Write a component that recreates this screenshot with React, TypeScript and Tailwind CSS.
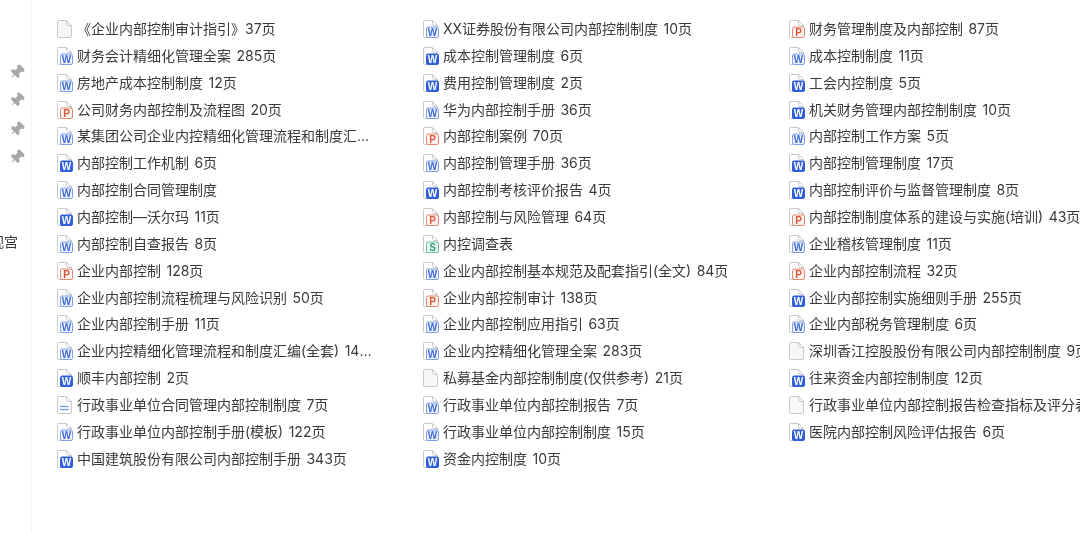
import { Pin } from "lucide-react";

type Kind = "blank" | "word" | "wordDark" | "ppt" | "sheet" | "lines";

type Item = [Kind, string];

const columns: Item[][] = [
  [
    ["blank", "《企业内部控制审计指引》37页"],
    ["word", "财务会计精细化管理全案 285页"],
    ["word", "房地产成本控制制度 12页"],
    ["ppt", "公司财务内部控制及流程图 20页"],
    ["word", "某集团公司企业内控精细化管理流程和制度汇编(全套) 142页"],
    ["wordDark", "内部控制工作机制 6页"],
    ["word", "内部控制合同管理制度"],
    ["wordDark", "内部控制—沃尔玛 11页"],
    ["word", "内部控制自查报告 8页"],
    ["ppt", "企业内部控制 128页"],
    ["word", "企业内部控制流程梳理与风险识别 50页"],
    ["word", "企业内部控制手册 11页"],
    ["word", "企业内控精细化管理流程和制度汇编(全套) 142页"],
    ["wordDark", "顺丰内部控制 2页"],
    ["lines", "行政事业单位合同管理内部控制制度 7页"],
    ["word", "行政事业单位内部控制手册(模板) 122页"],
    ["wordDark", "中国建筑股份有限公司内部控制手册 343页"],
  ],
  [
    ["word", "XX证券股份有限公司内部控制制度 10页"],
    ["wordDark", "成本控制管理制度 6页"],
    ["wordDark", "费用控制管理制度 2页"],
    ["word", "华为内部控制手册 36页"],
    ["ppt", "内部控制案例 70页"],
    ["word", "内部控制管理手册 36页"],
    ["wordDark", "内部控制考核评价报告 4页"],
    ["ppt", "内部控制与风险管理 64页"],
    ["sheet", "内控调查表"],
    ["word", "企业内部控制基本规范及配套指引(全文) 84页"],
    ["ppt", "企业内部控制审计 138页"],
    ["word", "企业内部控制应用指引 63页"],
    ["word", "企业内控精细化管理全案 283页"],
    ["blank", "私募基金内部控制制度(仅供参考) 21页"],
    ["word", "行政事业单位内部控制报告 7页"],
    ["word", "行政事业单位内部控制制度 15页"],
    ["wordDark", "资金内控制度 10页"],
  ],
  [
    ["ppt", "财务管理制度及内部控制 87页"],
    ["word", "成本控制制度 11页"],
    ["wordDark", "工会内控制度 5页"],
    ["wordDark", "机关财务管理内部控制制度 10页"],
    ["word", "内部控制工作方案 5页"],
    ["wordDark", "内部控制管理制度 17页"],
    ["wordDark", "内部控制评价与监督管理制度 8页"],
    ["ppt", "内部控制制度体系的建设与实施(培训) 43页"],
    ["word", "企业稽核管理制度 11页"],
    ["ppt", "企业内部控制流程 32页"],
    ["wordDark", "企业内部控制实施细则手册 255页"],
    ["word", "企业内部税务管理制度 6页"],
    ["blank", "深圳香江控股股份有限公司内部控制制度 9页"],
    ["wordDark", "往来资金内部控制制度 12页"],
    ["blank", "行政事业单位内部控制报告检查指标及评分表"],
    ["wordDark", "医院内部控制风险评估报告 6页"],
  ],
];

function FileIcon({ kind }: { kind: Kind }) {
  const badge = {
    word: { stroke: "#7f9fe8", fill: "#f0f4fe", text: "#3f6ad8", letter: "W" },
    wordDark: { stroke: "#2f5fdc", fill: "#2f5fdc", text: "#ffffff", letter: "W" },
    ppt: { stroke: "#e58a72", fill: "#fdf3f0", text: "#d9583a", letter: "P" },
    sheet: { stroke: "#62c09c", fill: "#effaf5", text: "#2e9e74", letter: "S" },
  };
  const page = kind === "blank" ? "#f7f7f7" : "#ffffff";
  return (
    <svg width="16" height="18" viewBox="0 0 16 18" className="shrink-0">
      <path d="M1.500.5h8L14.500 5.500V16a1.500 1.500 0 0 1-1.500 1.500H1.500A1 1 0 0 1 .5 16.500V1.500a1 1 0 0 1 1-1z" fill={page} stroke="#c9c9c9" />
      <path d="M9.500.5v3a2 2 0 0 0 2 2h3" fill="none" stroke="#c9c9c9" />
      {kind === "lines" && (
        <g stroke="#6f92e4" strokeWidth="1.200">
          <path d="M3 10.500h8.500" />
          <path d="M3 13.500h8.500" />
        </g>
      )}
      {kind !== "blank" && kind !== "lines" && (
        <g>
          <rect x="3.500" y="7" width="12" height="10.500" rx="1.500" fill={badge[kind].fill} stroke={badge[kind].stroke} />
          <text x="9.500" y="16" textAnchor="middle" fontSize="10" fontWeight="700" fontFamily="Liberation Sans, sans-serif" fill={badge[kind].text}>
            {badge[kind].letter}
          </text>
        </g>
      )}
    </svg>
  );
}

export default function App() {
  return (
    <div className="flex h-[533px] w-[1080px] overflow-hidden bg-white font-['Inter','Noto_Sans_CJK_SC',sans-serif] text-sm text-[#3a3a3a] [word-spacing:1.500px] blur-[0.300px]">
      <aside className="flex w-[32px] shrink-0 flex-col overflow-hidden border-r border-[#f3f3f3] pt-[64px]">
        <div className="flex flex-col items-end gap-[12.400px] pr-[6px] text-[#a8a8a8]">
          {[0, 1, 2, 3].map((i) => (
            <Pin key={i} size={16} fill="currentColor" strokeWidth={1.500} className="rotate-45" />
          ))}
        </div>
        <div className="mt-[66px] ml-[-10px] whitespace-nowrap font-['Noto_Sans_CJK_SC',sans-serif] text-sm leading-5">视宫</div>
      </aside>
      <main className="grid flex-1 grid-cols-[366px_366px_1fr] pt-[15.500px] pl-[25px]">
        {columns.map((col, c) => (
          <ul key={c} className="min-w-0">
            {col.map(([kind, label], i) => (
              <li key={i} className="flex h-[26.870px] items-center gap-[4px]">
                <FileIcon kind={kind} />
                <span className={c === 2 ? "overflow-hidden whitespace-nowrap" : "max-w-[296px] truncate"}>
                  {label}
                </span>
              </li>
            ))}
          </ul>
        ))}
      </main>
    </div>
  );
}
